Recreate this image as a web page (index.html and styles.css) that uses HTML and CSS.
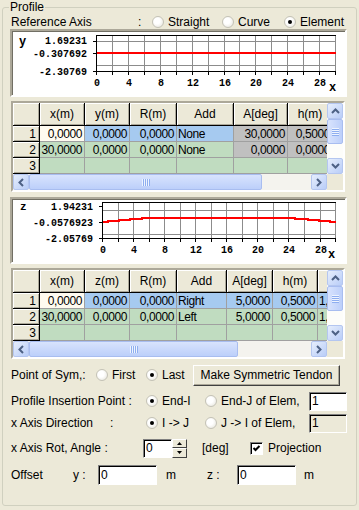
FILE: index.html
```html
<!DOCTYPE html>
<html lang="en">
<head>
    <meta charset="UTF-8">
    <title>Profile</title>
    <link rel="stylesheet" href="styles.css">
</head>
<body>

<fieldset class="profile">
    <legend>Profile</legend>

    <div class="axis-row">
        <span class="axis-label">Reference Axis</span>
        <span class="axis-colon">:</span>
        <span class="option opt-straight"><span class="radio"></span>Straight</span>
        <span class="option opt-curve"><span class="radio"></span>Curve</span>
        <span class="option"><span class="radio checked"></span>Element</span>
    </div>

    <!-- y profile chart -->
    <div class="chart">
        <svg class="plot" width="332" height="64" viewBox="12 31 332 64">
            <g stroke="#8c8c8c" shape-rendering="crispEdges" fill="none">
                <path d="M96 41.5H336M96 65.5H336"/>
                <path d="M112.5 35V71M128.5 35V71M144.5 35V71M160.5 35V71M176.5 35V71M192.5 35V71M208.5 35V71M224.5 35V71M239.5 35V71M255.5 35V71M271.5 35V71M287.5 35V71M303.5 35V71M319.5 35V71M335.5 35V71"/>
            </g>
            <g stroke="#000" shape-rendering="crispEdges" fill="none">
                <path d="M96 35.5H336M96.5 35V72M96 71.5H336M93 41.5H96M93 53.5H96M93 71.5H96"/>
                <path d="M96.5 71V75M112.5 71V75M128.5 71V75M144.5 71V75M160.5 71V75M176.5 71V75M192.5 71V75M208.5 71V75M224.5 71V75M239.5 71V75M255.5 71V75M271.5 71V75M287.5 71V75M303.5 71V75M319.5 71V75M335.5 71V75"/>
            </g>
            <path d="M97 53H336" stroke="#f00" stroke-width="2" shape-rendering="crispEdges"/>
            <text class="axis-name" x="19" y="45">y</text>
            <g class="ticks" text-anchor="end">
                <text x="87" y="44">1.69231</text>
                <text x="87" y="57">-0.307692</text>
                <text x="87" y="75">-2.30769</text>
            </g>
            <g class="ticks" text-anchor="middle">
                <text x="97" y="86">0</text>
                <text x="129" y="86">4</text>
                <text x="161" y="86">8</text>
                <text x="193" y="86">12</text>
                <text x="225" y="86">16</text>
                <text x="256" y="86">20</text>
                <text x="288" y="86">24</text>
                <text x="320" y="86">28</text>
            </g>
            <text class="axis-name" x="329" y="91">x</text>
        </svg>
    </div>

    <div class="grid">
        <div class="grid-view">
            <table class="sheet sheet-y">
                <colgroup>
                    <col class="c-rh"><col class="c-45"><col class="c-45"><col class="c-47"><col class="c-57"><col class="c-54"><col class="c-45">
                </colgroup>
                <tr>
                    <th></th><th>x(m)</th><th>y(m)</th><th>R(m)</th><th>Add</th><th>A[deg]</th><th>h(m)</th>
                </tr>
                <tr>
                    <th class="rh">1</th>
                    <td class="cream">0,0000</td><td class="blue">0,0000</td><td class="blue">0,0000</td>
                    <td class="blue txt">None</td><td class="gray">30,0000</td><td class="gray">0,5000</td>
                </tr>
                <tr>
                    <th class="rh">2</th>
                    <td class="green">30,0000</td><td class="green">0,0000</td><td class="green">0,0000</td>
                    <td class="green txt">None</td><td class="gray">0,0000</td><td class="gray">0,0000</td>
                </tr>
                <tr>
                    <th class="rh">3</th>
                    <td class="green"></td><td class="green"></td><td class="green"></td>
                    <td class="green"></td><td class="green"></td><td class="green"></td>
                </tr>
            </table>
        </div>
        <div class="vscroll">
            <span class="sb-btn"><svg width="9" height="6" viewBox="0 0 9 6"><path d="M1 5L4.5 1.5L8 5" stroke="#4d6185" stroke-width="2" fill="none"/></svg></span>
            <span class="sb-thumb-v"><span class="grip-v"></span></span>
            <span class="sb-track"></span>
            <span class="sb-btn"><svg width="9" height="6" viewBox="0 0 9 6"><path d="M1 1L4.5 4.5L8 1" stroke="#4d6185" stroke-width="2" fill="none"/></svg></span>
        </div>
        <div class="hscroll">
            <span class="sb-btn"><svg width="6" height="9" viewBox="0 0 6 9"><path d="M5 1L1.5 4.5L5 8" stroke="#4d6185" stroke-width="2" fill="none"/></svg></span>
            <span class="sb-thumb-h" style="width: 233px"><span class="grip-h"></span></span>
            <span class="sb-track"></span>
            <span class="sb-btn"><svg width="6" height="9" viewBox="0 0 6 9"><path d="M1 1L4.5 4.5L1 8" stroke="#4d6185" stroke-width="2" fill="none"/></svg></span>
        </div>
        <div class="corner"></div>
    </div>

    <!-- z profile chart -->
    <div class="chart chart-z">
        <svg class="plot" width="332" height="63" viewBox="12 199 332 63">
            <g stroke="#8c8c8c" shape-rendering="crispEdges" fill="none">
                <path d="M102 210.5H336M102 234.5H336"/>
                <path d="M118.5 202V238M133.5 202V238M149.5 202V238M164.5 202V238M180.5 202V238M195.5 202V238M211.5 202V238M226.5 202V238M242.5 202V238M257.5 202V238M273.5 202V238M288.5 202V238M304.5 202V238M320.5 202V238M335.5 202V238"/>
            </g>
            <g stroke="#000" shape-rendering="crispEdges" fill="none">
                <path d="M102 202.5H336M102.5 202V239M102 238.5H336M99 206.5H102M99 222.5H102M99 238.5H102"/>
                <path d="M102.5 238V242M118.5 238V242M133.5 238V242M149.5 238V242M164.5 238V242M180.5 238V242M195.5 238V242M211.5 238V242M226.5 238V242M242.5 238V242M257.5 238V242M273.5 238V242M288.5 238V242M304.5 238V242M320.5 238V242M335.5 238V242"/>
            </g>
            <path d="M103 222H108V221H119V220H130V219H142V218H295V219H308V220H319V221H330V222H336" stroke="#f00" stroke-width="2" fill="none" shape-rendering="crispEdges"/>
            <text class="axis-name small" x="20" y="210">z</text>
            <g class="ticks" text-anchor="end">
                <text x="93" y="210">1.94231</text>
                <text x="93" y="226">-0.0576923</text>
                <text x="93" y="242">-2.05769</text>
            </g>
            <g class="ticks" text-anchor="middle">
                <text x="103" y="253">0</text>
                <text x="134" y="253">4</text>
                <text x="165" y="253">8</text>
                <text x="196" y="253">12</text>
                <text x="227" y="253">16</text>
                <text x="258" y="253">20</text>
                <text x="289" y="253">24</text>
                <text x="321" y="253">28</text>
            </g>
            <text class="axis-name" x="328" y="258">x</text>
        </svg>
    </div>

    <div class="grid">
        <div class="grid-view">
            <table class="sheet sheet-z">
                <colgroup>
                    <col class="c-rh"><col class="c-45"><col class="c-45"><col class="c-47"><col class="c-50"><col class="c-46"><col class="c-45"><col class="c-45">
                </colgroup>
                <tr>
                    <th></th><th>x(m)</th><th>z(m)</th><th>R(m)</th><th>Add</th><th>A[deg]</th><th>h(m)</th><th></th>
                </tr>
                <tr>
                    <th class="rh">1</th>
                    <td class="cream">0,0000</td><td class="blue">0,0000</td><td class="blue">0,0000</td>
                    <td class="blue txt">Right</td><td class="blue">5,0000</td><td class="blue">0,5000</td><td class="blue txt">1,0000</td>
                </tr>
                <tr>
                    <th class="rh">2</th>
                    <td class="green">30,0000</td><td class="green">0,0000</td><td class="green">0,0000</td>
                    <td class="green txt">Left</td><td class="green">5,0000</td><td class="green">0,5000</td><td class="green txt">1,0000</td>
                </tr>
                <tr>
                    <th class="rh">3</th>
                    <td class="green"></td><td class="green"></td><td class="green"></td><td class="green"></td>
                    <td class="green"></td><td class="green"></td><td class="green"></td>
                </tr>
            </table>
        </div>
        <div class="vscroll">
            <span class="sb-btn"><svg width="9" height="6" viewBox="0 0 9 6"><path d="M1 5L4.5 1.5L8 5" stroke="#4d6185" stroke-width="2" fill="none"/></svg></span>
            <span class="sb-thumb-v"><span class="grip-v"></span></span>
            <span class="sb-track"></span>
            <span class="sb-btn"><svg width="9" height="6" viewBox="0 0 9 6"><path d="M1 1L4.5 4.5L8 1" stroke="#4d6185" stroke-width="2" fill="none"/></svg></span>
        </div>
        <div class="hscroll">
            <span class="sb-btn"><svg width="6" height="9" viewBox="0 0 6 9"><path d="M5 1L1.5 4.5L5 8" stroke="#4d6185" stroke-width="2" fill="none"/></svg></span>
            <span class="sb-thumb-h" style="width: 209px"><span class="grip-h"></span></span>
            <span class="sb-track"></span>
            <span class="sb-btn"><svg width="6" height="9" viewBox="0 0 6 9"><path d="M1 1L4.5 4.5L1 8" stroke="#4d6185" stroke-width="2" fill="none"/></svg></span>
        </div>
        <div class="corner"></div>
    </div>

    <div class="form-row row-sym">
        <span class="lbl-sym">Point of Sym,:</span>
        <span class="option opt-first"><span class="radio"></span>First</span>
        <span class="option opt-last"><span class="radio checked"></span>Last</span>
        <button class="btn">Make Symmetric Tendon</button>
    </div>

    <div class="form-row row-ins">
        <span class="lbl-wide">Profile Insertion Point :</span>
        <span class="option opt-a"><span class="radio checked"></span>End-I</span>
        <span class="option opt-b"><span class="radio"></span>End-J of Elem,</span>
        <input class="edit elem-no" value="1">
    </div>

    <div class="form-row row-dir">
        <span class="lbl-dir">x Axis Direction</span>
        <span class="lbl-colon">:</span>
        <span class="option opt-a"><span class="radio checked"></span>I -&gt; J</span>
        <span class="option opt-b"><span class="radio"></span>J -&gt; I of Elem,</span>
        <input class="edit elem-no" value="1" disabled>
    </div>

    <div class="form-row row-rot">
        <span class="lbl-rot">x Axis Rot, Angle :</span>
        <span class="spin">
            <input class="edit spin-edit" value="0">
            <span class="spin-btns">
                <span class="spin-btn"><svg width="5" height="3" viewBox="0 0 5 3"><path d="M2.5 0L5 3H0Z" fill="#000"/></svg></span>
                <span class="spin-btn"><svg width="5" height="3" viewBox="0 0 5 3"><path d="M0 0H5L2.5 3Z" fill="#000"/></svg></span>
            </span>
        </span>
        <span class="unit-deg">[deg]</span>
        <span class="check"><svg width="9" height="9" viewBox="0 0 9 9"><path d="M1.5 4L3.5 6L7.5 2" stroke="#000" stroke-width="2" fill="none"/></svg></span>
        <span>Projection</span>
    </div>

    <div class="form-row row-offset">
        <span class="lbl-offset">Offset</span>
        <span class="axis-y">y :</span>
        <input class="edit off-edit" value="0">
        <span class="unit-m">m</span>
        <span class="axis-z">z :</span>
        <input class="edit off-edit" value="0">
        <span class="unit-m last">m</span>
    </div>
</fieldset>

</body>
</html>
```

FILE: styles.css
```css
* {
    margin: 0;
    padding: 0;
    box-sizing: border-box;
}

body {
    font-family: 'Liberation Sans', Arial, sans-serif;
    font-size: 12px;
    color: #000;
    background-color: #ece9d8;
    width: 359px;
    height: 510px;
    overflow: hidden;
}

.profile {
    margin: 0 2px;
    height: 506px;
    border: 1px solid #d0d0bf;
    border-radius: 3px;
    padding: 0 9px 0 7px;
}

.profile legend {
    margin-left: -1px;
    padding: 0 1px;
    line-height: 14px;
}

/* radio / option */
.option {
    display: flex;
    align-items: center;
    white-space: nowrap;
}

.radio {
    display: inline-block;
    position: relative;
    width: 12px;
    height: 12px;
    margin-right: 4px;
    border-radius: 50%;
    border: 1px solid #c4c2b6;
    background: radial-gradient(circle at 40% 40%, #ffffff 35%, #e2e0d6 100%);
    flex: none;
}

.radio.checked::after {
    content: "";
    position: absolute;
    left: 3px;
    top: 3px;
    width: 4px;
    height: 4px;
    border-radius: 50%;
    background-color: #000;
}

.axis-row {
    display: flex;
    align-items: center;
    height: 15px;
    padding-left: 1px;
}

.axis-label {
    width: 127px;
}

.axis-colon {
    width: 14px;
}

.opt-straight {
    width: 70px;
}

.opt-curve {
    width: 62px;
}

/* charts */
.chart {
    height: 68px;
    background-color: #fff;
    border: 2px solid;
    border-color: #aca899 #fff #fff #aca899;
    box-shadow: inset 1px 1px #716f64;
}

.chart-z {
    height: 67px;
    margin-top: 5px;
}

.plot {
    display: block;
}

.plot .ticks {
    font-family: 'Liberation Mono', monospace;
    font-size: 10px;
    font-weight: bold;
}

.plot .axis-name {
    font-family: 'Liberation Mono', monospace;
    font-size: 12px;
    font-weight: bold;
}

.plot .axis-name.small {
    font-size: 11px;
}

/* spreadsheet grids */
.grid {
    margin: 4px 2px 0 1px;
    height: 91px;
    border: 2px solid;
    border-color: #aca899 #fff #fff #aca899;
    box-shadow: inset 1px 1px #716f64;
    display: grid;
    grid-template-columns: 1fr 16px;
    grid-template-rows: 71px 16px;
    background-color: #fff;
}

.grid-view {
    overflow: hidden;
}

.sheet {
    border-collapse: separate;
    border-spacing: 0;
    table-layout: fixed;
}

.sheet-y {
    width: 320px;
}

.sheet-z {
    width: 350px;
}

.c-rh { width: 27px; }
.c-45 { width: 45px; }
.c-46 { width: 46px; }
.c-47 { width: 47px; }
.c-50 { width: 50px; }
.c-54 { width: 54px; }
.c-57 { width: 57px; }

.sheet th {
    height: 23px;
    font-weight: normal;
    background-color: #ece9d8;
    border-right: 1px solid #000;
    border-bottom: 1px solid #000;
    box-shadow: inset 1px 1px #fff, inset -1px -1px #aca899;
    white-space: nowrap;
    overflow: hidden;
}

.sheet th.rh {
    height: 16px;
    text-align: right;
    padding-right: 3px;
    line-height: 14px;
}

.sheet td {
    height: 16px;
    line-height: 14px;
    text-align: right;
    padding-right: 2px;
    border-right: 1px solid #a0a0a0;
    border-bottom: 1px solid #a0a0a0;
    white-space: nowrap;
    overflow: hidden;
    letter-spacing: -0.4px;
}

.sheet td.txt {
    text-align: left;
    padding-left: 1px;
}

.cream { background-color: #fffbf0; }
.blue { background-color: #a6caf0; }
.green { background-color: #c0dcc0; }
.gray { background-color: #c0c0c0; }

/* scrollbars */
.vscroll {
    display: flex;
    flex-direction: column;
    background-color: #fdfdfa;
}

.hscroll {
    display: flex;
    background-color: #f4f3ee;
}

.corner {
    background-color: #ece9d8;
}

.sb-btn {
    flex: none;
    width: 16px;
    height: 16px;
    display: flex;
    align-items: center;
    justify-content: center;
    border: 1px solid #b4c6f0;
    border-radius: 2px;
    background: linear-gradient(135deg, #e6eefc, #b9cdf8);
}

.sb-track {
    flex: 1;
}

.sb-thumb-h {
    flex: none;
    height: 16px;
    display: flex;
    align-items: center;
    justify-content: center;
    border: 1px solid #a8bdf0;
    border-radius: 2px;
    background: linear-gradient(#d8e3fd, #bccffa);
}

.sb-thumb-v {
    flex: none;
    height: 25px;
    display: flex;
    align-items: center;
    justify-content: center;
    border: 1px solid #a8bdf0;
    border-radius: 2px;
    background: linear-gradient(90deg, #d8e3fd, #bccffa);
}

.grip-h {
    width: 8px;
    height: 7px;
    background: repeating-linear-gradient(90deg, #eef4fe 0 1px, #8eaef0 1px 2px);
}

.grip-v {
    width: 7px;
    height: 8px;
    background: repeating-linear-gradient(180deg, #eef4fe 0 1px, #8eaef0 1px 2px);
}

/* lower form */
.form-row {
    display: flex;
    align-items: center;
    padding-left: 1px;
    white-space: nowrap;
}

.row-sym {
    margin-top: 5px;
    height: 22px;
}

.row-ins {
    margin-top: 5px;
    height: 20px;
}

.row-dir {
    margin-top: 2px;
    height: 20px;
}

.row-rot {
    margin-top: 5px;
    height: 20px;
}

.row-offset {
    margin-top: 6px;
    height: 22px;
}

.lbl-sym { width: 85px; }
.opt-first { width: 50px; }
.opt-last { width: 47px; }
.lbl-wide { width: 135px; }
.lbl-dir { width: 99px; }
.lbl-colon { width: 36px; }
.opt-a { width: 59px; }
.opt-b { width: 104px; }
.lbl-rot { width: 132px; }

.btn {
    width: 147px;
    height: 21px;
    font-family: inherit;
    font-size: 12px;
    background-color: #ece9d8;
    border: 1px solid;
    border-color: #fff #404040 #404040 #fff;
    box-shadow: inset -1px -1px #aca899;
}

.edit {
    height: 19px;
    font-family: inherit;
    font-size: 12px;
    padding-left: 2px;
    background-color: #fff;
    border: 1px solid;
    border-color: #808080 #fff #fff #808080;
    box-shadow: inset 1px 1px #000;
    outline: none;
}

.edit:disabled {
    color: #000;
    background-color: #ece9d8;
}

.elem-no {
    width: 38px;
}

.spin {
    display: flex;
    width: 44px;
    height: 19px;
}

.spin-edit {
    width: 29px;
}

.spin-btns {
    display: flex;
    flex-direction: column;
    width: 15px;
}

.spin-btn {
    flex: 1;
    display: flex;
    align-items: center;
    justify-content: center;
    background-color: #ece9d8;
    border: 1px solid;
    border-color: #fff #404040 #404040 #fff;
}

.unit-deg {
    margin-left: 15px;
    width: 48px;
}

.check {
    width: 13px;
    height: 13px;
    margin-right: 5px;
    display: flex;
    align-items: center;
    justify-content: center;
    background-color: #fff;
    border: 1px solid;
    border-color: #808080 #fff #fff #808080;
    box-shadow: inset 1px 1px #000;
}

.lbl-offset { width: 62px; }
.axis-y { width: 25px; }
.axis-z { width: 30px; }

.off-edit {
    width: 59px;
    height: 20px;
}

.unit-m {
    margin-left: 9px;
    width: 41px;
}

.unit-m.last {
    margin-left: 8px;
}
```
